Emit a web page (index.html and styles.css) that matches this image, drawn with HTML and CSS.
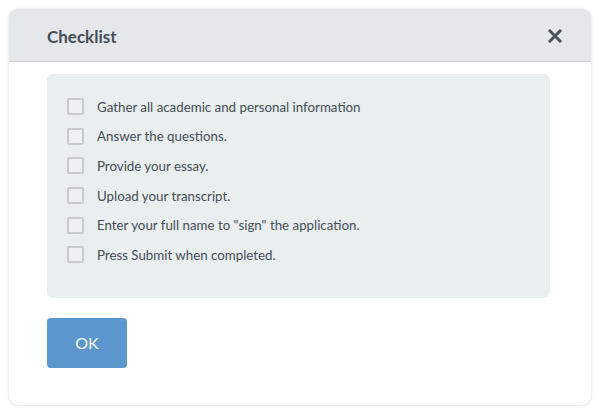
FILE: index.html
```html
<!DOCTYPE html>
<html lang="en">
<head>
<meta charset="utf-8">
<title>Checklist</title>
<link rel="stylesheet" href="styles.css">
</head>
<body>
<div class="modal">
  <div class="modal-header">
    <h2 class="modal-title">Checklist</h2>
    <button class="close" aria-label="Close">
      <svg width="14" height="14" viewBox="0 0 14 14"><path d="M2 2 L12 12 M12 2 L2 12" stroke="#4a535c" stroke-width="3" stroke-linecap="square" fill="none"/></svg>
    </button>
  </div>
  <div class="modal-body">
    <div class="panel">
      <label class="row"><span class="box"></span><span class="label">Gather all academic and personal information</span></label>
      <label class="row"><span class="box"></span><span class="label">Answer the questions.</span></label>
      <label class="row"><span class="box"></span><span class="label">Provide your essay.</span></label>
      <label class="row"><span class="box"></span><span class="label">Upload your transcript.</span></label>
      <label class="row"><span class="box"></span><span class="label">Enter your full name to "sign" the application.</span></label>
      <label class="row"><span class="box"></span><span class="label">Press Submit when completed.</span></label>
    </div>
    <button class="btn-ok">OK</button>
  </div>
</div>
</body>
</html>
```
FILE: styles.css
```css
html, body {
  margin: 0;
  padding: 0;
  background: #ffffff;
}
body {
  font-family: Lato, "Open Sans", sans-serif;
  color: #454d56;
  padding: 9px;
}
.modal {
  width: 582px;
  height: 396px;
  box-sizing: border-box;
  border-radius: 9px;
  background: #ffffff;
  box-shadow: 0 0 3px rgba(0,0,0,0.12), 0 1px 2px rgba(0,0,0,0.06);
  overflow: hidden;
  display: flex;
  flex-direction: column;
}
.modal-header {
  height: 53px;
  box-sizing: border-box;
  background: #e4e8eb;
  border-bottom: 1px solid #cdd2d6;
  display: flex;
  align-items: center;
  justify-content: space-between;
  padding: 0 29px 0 38px;
}
.modal-title {
  margin: 0;
  font-size: 17px;
  font-weight: 700;
  color: #454d56;
  padding-top: 2px;
}
.close {
  border: 0;
  background: transparent;
  padding: 0;
  width: 14px;
  height: 14px;
  display: flex;
  margin-top: 2px;
}
.modal-body {
  padding: 12px 41px 0 38px;
}
.panel {
  background: #e9eeef;
  border-radius: 6px;
  padding: 18px 20px 28px;
}
.row {
  display: flex;
  align-items: center;
  height: 29.6px;
  font-size: 13.3px;
}
.box {
  width: 13px;
  height: 13px;
  border: 2px solid #c6cacc;
  border-radius: 2px;
  background: #edf1f1;
  margin-right: 13px;
  flex: none;
}
.label {
  color: #454d56;
}
.btn-ok {
  margin-top: 20px;
  width: 80px;
  height: 50px;
  border: 0;
  border-radius: 4px;
  background: #5b96cd;
  color: #ffffff;
  font-family: Lato, "Open Sans", sans-serif;
  font-size: 16px;
  display: block;
}
```
